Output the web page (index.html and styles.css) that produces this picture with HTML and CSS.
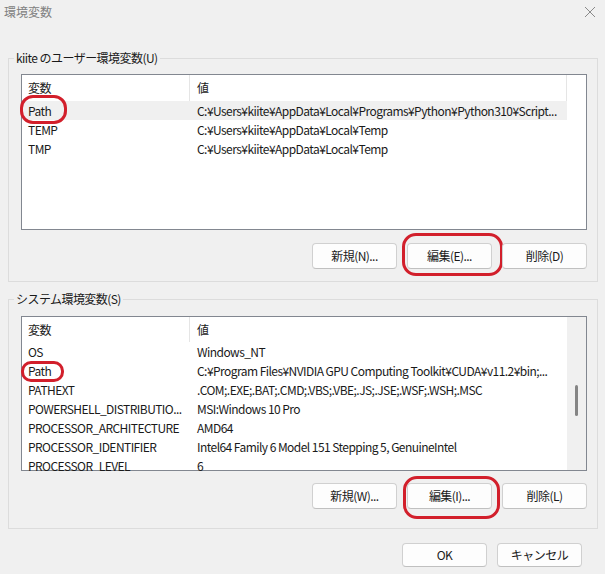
FILE: index.html
```html
<!DOCTYPE html>
<html lang="ja">
<head>
<meta charset="utf-8">
<title>環境変数</title>
<link rel="stylesheet" href="styles.css">
</head>
<body>
<div class="window">
  <div class="titlebar">
    <span class="title">環境変数</span>
    <svg class="close" width="12" height="12" viewBox="0 0 12 12"><path d="M1 1L11 11M11 1L1 11" stroke="#8a8a8a" stroke-width="1" fill="none"/></svg>
  </div>
  <div class="content">
    <fieldset class="group group-user">
      <legend>kiite のユーザー環境変数(U)</legend>
      <div class="list list-user">
        <div class="list-inner">
          <div class="row head"><div class="c-name">変数</div><div class="c-val">値</div></div>
          <div class="row selected"><div class="c-name"><span class="mark mark-user-path">Path</span></div><div class="c-val">C:¥Users¥kiite¥AppData¥Local¥Programs¥Python¥Python310¥Script...</div></div>
          <div class="row"><div class="c-name">TEMP</div><div class="c-val">C:¥Users¥kiite¥AppData¥Local¥Temp</div></div>
          <div class="row"><div class="c-name">TMP</div><div class="c-val">C:¥Users¥kiite¥AppData¥Local¥Temp</div></div>
        </div>
      </div>
      <div class="buttons">
        <button class="btn">新規(N)...</button>
        <button class="btn mark-btn-user">編集(E)...</button>
        <button class="btn">削除(D)</button>
      </div>
    </fieldset>

    <fieldset class="group group-sys">
      <legend>システム環境変数(S)</legend>
      <div class="list list-sys">
        <div class="list-inner">
          <div class="row head"><div class="c-name">変数</div><div class="c-val">値</div></div>
          <div class="row"><div class="c-name">OS</div><div class="c-val">Windows_NT</div></div>
          <div class="row"><div class="c-name"><span class="mark mark-sys-path">Path</span></div><div class="c-val">C:¥Program Files¥NVIDIA GPU Computing Toolkit¥CUDA¥v11.2¥bin;...</div></div>
          <div class="row"><div class="c-name">PATHEXT</div><div class="c-val">.COM;.EXE;.BAT;.CMD;.VBS;.VBE;.JS;.JSE;.WSF;.WSH;.MSC</div></div>
          <div class="row"><div class="c-name">POWERSHELL_DISTRIBUTIO...</div><div class="c-val">MSI:Windows 10 Pro</div></div>
          <div class="row"><div class="c-name">PROCESSOR_ARCHITECTURE</div><div class="c-val">AMD64</div></div>
          <div class="row"><div class="c-name">PROCESSOR_IDENTIFIER</div><div class="c-val">Intel64 Family 6 Model 151 Stepping 5, GenuineIntel</div></div>
          <div class="row"><div class="c-name">PROCESSOR_LEVEL</div><div class="c-val">6</div></div>
        </div>
        <div class="scrollbar"><div class="thumb"></div></div>
      </div>
      <div class="buttons">
        <button class="btn">新規(W)...</button>
        <button class="btn mark-btn-sys">編集(I)...</button>
        <button class="btn">削除(L)</button>
      </div>
    </fieldset>

    <div class="footer">
      <button class="btn">OK</button>
      <button class="btn">キャンセル</button>
    </div>
  </div>
</div>
</body>
</html>
```
FILE: styles.css
```css
* { box-sizing: border-box; }
html, body { margin: 0; padding: 0; }
body {
  background: #f0f0f0;
  font-family: "Noto Sans CJK JP", sans-serif;
  font-size: 12px;
  line-height: 16px;
  letter-spacing: -0.55px;
  color: #1a1a1a;
  width: 605px;
  height: 574px;
  overflow: hidden;
}
.window { width: 605px; height: 574px; }
.titlebar {
  height: 24px;
  display: flex;
  align-items: center;
  justify-content: space-between;
  padding: 0 9px 0 4px;
}
.title { color: #808080; font-size: 12px; letter-spacing: 0; }
.close { display: block; }
.content { padding: 26px 7px 0 8px; }
.group {
  margin: 0;
  border: 1px solid #dcdcdc;
  padding: 8px 10px 12px 12px;
  min-width: 0;
}
.group legend {
  padding: 0 2px;
  margin-left: -7px;
  line-height: 16px;
  color: #1a1a1a;
}
.group-sys { margin-top: 9px; padding-top: 9px; padding-bottom: 19px; }
.list {
  border: 1px solid #828790;
  background: #fff;
  display: flex;
  clip-path: inset(-30px -30px 0 -30px);
}
.list-user { height: 156px; }
.list-sys { height: 155px; }
.list-inner { width: 545px; flex: none; }
.row {
  display: flex;
  height: 19px;
  align-items: center;
  white-space: nowrap;
}
.list-user .row.head { height: 26px; }
.list-sys .row.head { height: 25px; }
.row.selected { background: #f0f0f0; }
.c-name {
  width: 168px;
  flex: none;
  padding-left: 6px;
  height: 100%;
  display: flex;
  align-items: center;
}
.c-val {
  flex: 1;
  padding-left: 7px;
  overflow: hidden;
  height: 100%;
  display: flex;
  align-items: center;
}
.head .c-name { border-right: 1px solid #e5e5e5; }
.list-user .head .c-val { border-right: 1px solid #e5e5e5; }
.scrollbar {
  flex: 1;
  background: #f0f0f0;
  position: relative;
}
.thumb {
  position: absolute;
  left: 8px;
  top: 68px;
  width: 3px;
  height: 31px;
  background: #858585;
  border-radius: 2px;
}
.buttons {
  display: flex;
  justify-content: flex-end;
  gap: 10px;
  margin-top: 13px;
}
.group-sys .buttons { margin-top: 12px; }
.btn {
  font: inherit;
  letter-spacing: inherit;
  color: #1a1a1a;
  width: 85px;
  height: 26px;
  background: #fdfdfd;
  border: 1px solid #d0d0d0;
  border-bottom-color: #c0c0c0;
  border-radius: 4px;
  padding: 0;
  position: relative;
}
.footer {
  display: flex;
  justify-content: flex-end;
  gap: 10px;
  margin-top: 14px;
  padding-right: 16px;
}
.footer .btn { height: 24px; }
.mark { position: relative; }
.mark::after, .mark-btn-user::after, .mark-btn-sys::after {
  content: "";
  position: absolute;
  border: 3px solid #d21f2b;
  pointer-events: none;
}
.mark-user-path::after { left: -8px; right: -16px; top: -8px; bottom: -5px; border-radius: 13px; }
.mark-sys-path::after { left: -7px; right: -13px; top: -2px; bottom: -3px; border-radius: 10px; }
.mark-btn-user::after { left: -6px; right: -12px; top: -11px; bottom: -8px; border-radius: 14px; }
.mark-btn-sys::after { left: -5px; right: -9px; top: -8px; bottom: -11px; border-radius: 14px; }
```
